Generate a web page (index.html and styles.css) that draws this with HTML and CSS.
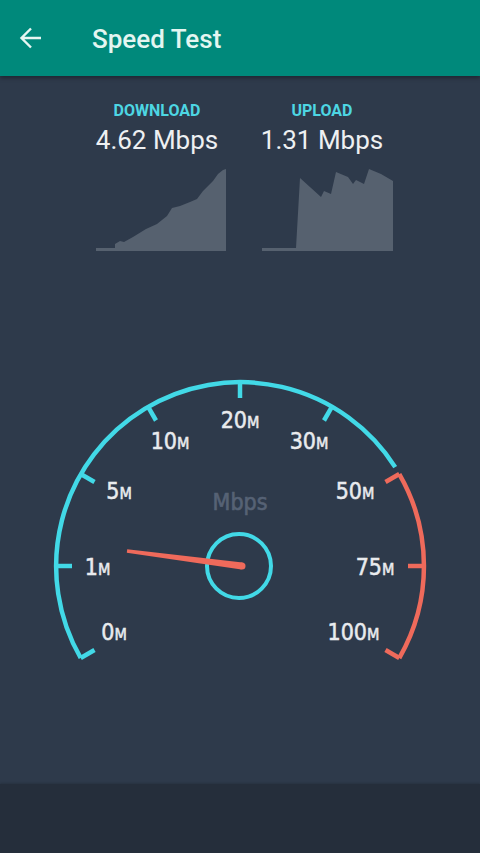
FILE: index.html
```html
<!DOCTYPE html>
<html lang="en">
<head>
  <meta charset="UTF-8">
  <title>Speed Test</title>
  <link rel="stylesheet" href="styles.css">
</head>
<body>

  <header class="appbar">
    <svg class="back" viewBox="0 0 24 24" width="24" height="24">
      <path d="M22 12H2.5M12 2.5L2.5 12l9.5 9.5" />
    </svg>
    <h1 class="title">Speed Test</h1>
  </header>

  <main class="screen">
    <section class="stats">
      <div class="stat">
        <div class="stat-label">DOWNLOAD</div>
        <div class="stat-value">4.62 Mbps</div>
        <svg class="chart" viewBox="0 0 132 84" width="132" height="84">
          <polygon points="0,81 19,81 19,77 24,74 28,75 37,70 50,62 61,57 71,49 76,41 84,39 94,35 101,32 107,24 117,14 122,7 127,3 130,2 130,84 0,84" />
        </svg>
      </div>
      <div class="stat">
        <div class="stat-label">UPLOAD</div>
        <div class="stat-value">1.31 Mbps</div>
        <svg class="chart" viewBox="0 0 132 84" width="132" height="84">
          <polygon points="1,81 35,81 39,11 60,30 63,24 70,27 75,5 87,10 92,17 95,13 103,17 108,2 120,7 132,14 132,84 1,84" />
        </svg>
      </div>
    </section>

    <div class="gauge-wrap">
      <!-- coordinates: page y minus 360 -->
      <svg class="gauge" viewBox="0 0 480 316" width="480" height="316">
        <path class="arc cyan" d="M80.7 298 A184 184 0 0 1 395.2 107.1" />
        <path class="arc red" d="M399.3 114 A184 184 0 0 1 399.3 298" />

        <line class="tick cyan" x1="80.7" y1="298" x2="94.5" y2="290" />
        <line class="tick cyan" x1="56" y1="206" x2="72" y2="206" />
        <line class="tick cyan" x1="80.7" y1="114" x2="94.5" y2="122" />
        <line class="tick cyan" x1="148" y1="46.7" x2="156" y2="60.5" />
        <line class="tick cyan" x1="240" y1="22" x2="240" y2="38" />
        <line class="tick cyan" x1="332" y1="46.7" x2="324" y2="60.5" />
        <line class="tick red" x1="399.3" y1="114" x2="385.5" y2="122" />
        <line class="tick red" x1="424" y1="206" x2="408" y2="206" />
        <line class="tick red" x1="399.3" y1="298" x2="385.5" y2="290" />

        <text class="mark" x="114" y="279.5">0<tspan class="unit">M</tspan></text>
        <text class="mark" x="97.5" y="214.5">1<tspan class="unit">M</tspan></text>
        <text class="mark" x="119" y="138.5">5<tspan class="unit">M</tspan></text>
        <text class="mark" x="170" y="89">10<tspan class="unit">M</tspan></text>
        <text class="mark" x="240" y="67.5">20<tspan class="unit">M</tspan></text>
        <text class="mark" x="309" y="89">30<tspan class="unit">M</tspan></text>
        <text class="mark" x="355" y="138.5">50<tspan class="unit">M</tspan></text>
        <text class="mark" x="375" y="214.5">75<tspan class="unit">M</tspan></text>
        <text class="mark" x="353.5" y="279.5">100<tspan class="unit">M</tspan></text>

        <text class="gauge-unit" x="240" y="150">Mbps</text>

        <circle class="hub" cx="239" cy="206" r="32" />
        <polygon class="needle" points="127.2,189.2 126.8,192.8 241.5,209.5 242.5,202.5" />
        <circle class="needle" cx="242" cy="206" r="3.5" />
      </svg>
    </div>
  </main>

  <footer class="navbar"></footer>

</body>
</html>
```

FILE: styles.css
```css
body {
  margin: 0;
  height: 853px;
  display: flex;
  flex-direction: column;
  background-color: #2e3a4b;
  font-family: Roboto, "Noto Sans", sans-serif;
  overflow: hidden;
}
.appbar {
  height: 76px;
  flex: none;
  display: flex;
  align-items: center;
  background-color: #00897b;
  box-shadow: 0 2px 4px rgba(0, 0, 0, 0.35);
  position: relative;
  z-index: 1;
}
.back {
  width: 24px;
  height: 24px;
  margin-left: 19px;
  fill: none;
  stroke: #e6f6f2;
  stroke-width: 2.4;
}
.title {
  margin: 2px 0 0 49px;
  font-size: 26px;
  font-weight: 500;
  color: #e3f6f1;
}
.screen {
  flex: 1;
  display: flex;
  flex-direction: column;
}
.stats {
  display: flex;
  justify-content: center;
  gap: 23px;
  padding-top: 25px;
  padding-right: 1px;
}
.stat {
  width: 142px;
  display: flex;
  flex-direction: column;
  align-items: center;
}
.stat-label {
  font-size: 16px;
  line-height: 19px;
  font-weight: 700;
  color: #4dd6e3;
}
.stat-value {
  margin-top: 5px;
  font-size: 26px;
  line-height: 30px;
  color: #eef0f2;
}
.chart {
  display: block;
  align-self: flex-end;
  margin-top: 12px;
  fill: #56616f;
}
.gauge-wrap {
  flex: 1;
  display: flex;
  align-items: center;
}
.gauge {
  display: block;
}
.arc {
  fill: none;
  stroke-width: 4.5;
}
.tick {
  stroke-width: 4.5;
}
.cyan { stroke: #42d9e7; }
.red { stroke: #ef6a5b; }
.mark {
  font-family: "DejaVu Sans Condensed", "DejaVu Sans", sans-serif;
  font-stretch: condensed;
  font-size: 23px;
  fill: #e9ebee;
  stroke: #e9ebee;
  stroke-width: 0.5;
  text-anchor: middle;
}
.unit {
  font-size: 16px;
}
.gauge-unit {
  font-family: "DejaVu Sans Condensed", "DejaVu Sans", sans-serif;
  font-stretch: condensed;
  font-size: 23px;
  fill: #566275;
  stroke: #566275;
  stroke-width: 0.6;
  text-anchor: middle;
}
.hub {
  fill: none;
  stroke: #42d9e7;
  stroke-width: 4;
}
.needle {
  fill: #ef6a5b;
}
.navbar {
  height: 69px;
  flex: none;
  background-color: #252e3b;
  box-shadow: 0 -1px 2px rgba(0, 0, 0, 0.15);
}
```
